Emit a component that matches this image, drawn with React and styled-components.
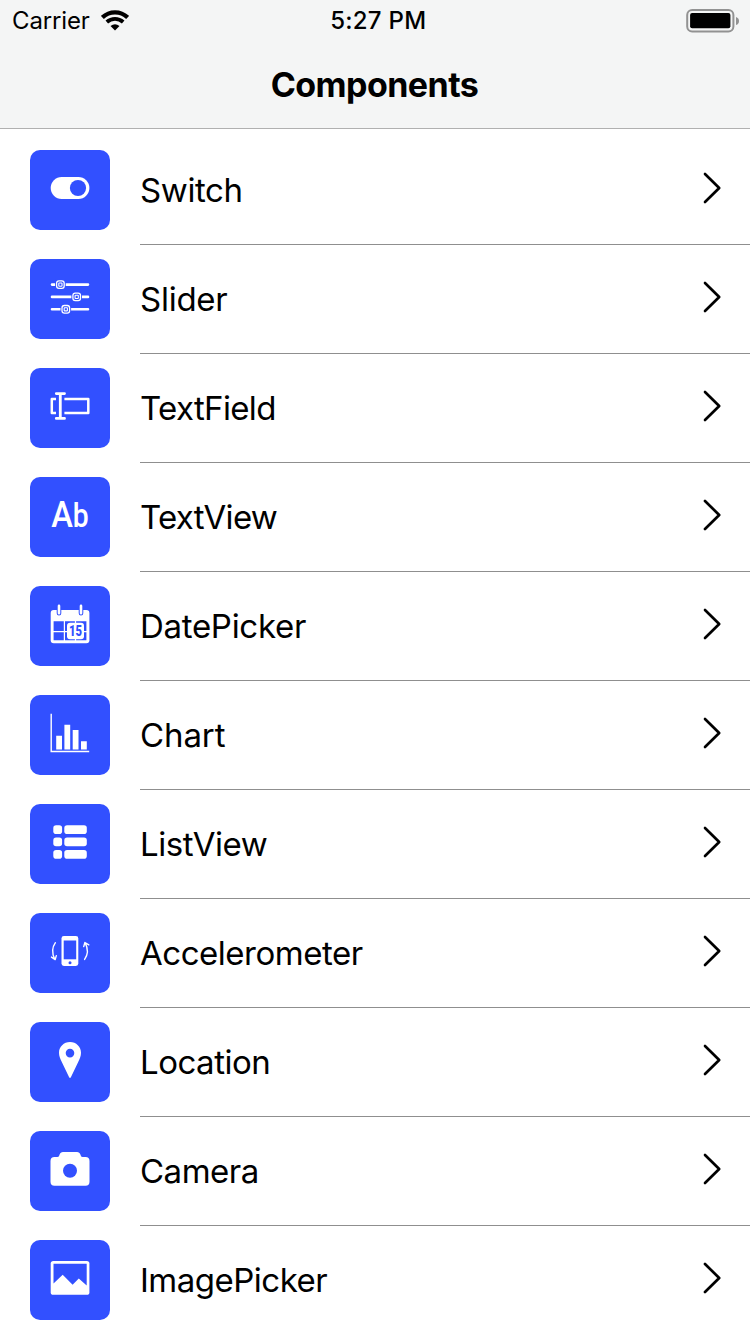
import React from 'react';
import styled, { createGlobalStyle } from 'styled-components';

const BLUE = '#3250ff';
const FONT = 'Inter, "Liberation Sans", sans-serif';

const GlobalStyle = createGlobalStyle`
  * { box-sizing: border-box; }
  body { margin: 0; background: #fff; }
`;

const Screen = styled.div`
  width: 750px;
  height: 1334px;
  overflow: hidden;
  background: #fff;
  color: #000;
  font-family: ${FONT};
`;

const Header = styled.header`
  height: 129px;
  background: #f4f5f5;
  border-bottom: 1px solid #b0b0b0;
`;

const StatusBar = styled.div`
  height: 40px;
  display: grid;
  grid-template-columns: 1fr auto 1fr;
  align-items: center;
  padding: 1px 10px 0 12px;
`;

const Carrier = styled.div`
  display: flex;
  align-items: center;
  gap: 11px;
`;

const StatusText = styled.span`
  display: inline-block;
  font-size: 24px;
  line-height: 38px;
  font-weight: ${(p) => p.$weight || 400};
  letter-spacing: ${(p) => p.$spacing || '0'};
  padding-left: ${(p) => p.$inset || '0'};
`;

const Battery = styled.svg`
  justify-self: end;
`;

const Title = styled.h1`
  margin: 0;
  height: 88px;
  padding-right: 1px;
  line-height: 89px;
  text-align: center;
  font-size: 34px;
  font-weight: 700;
  letter-spacing: -0.55px;
`;

const List = styled.ul`
  list-style: none;
  margin: 0;
  padding: 7px 0 0;
`;

const Row = styled.li`
  height: 109px;
  display: flex;
  gap: 30px;
  padding-left: 30px;
`;

const Tile = styled.div`
  width: 80px;
  height: 80px;
  margin-top: 14px;
  border-radius: 10px;
  background: ${BLUE};
  flex: none;
`;

const RowBody = styled.div`
  flex: 1;
  display: flex;
  align-items: center;
  justify-content: space-between;
  padding-right: 28px;
  border-bottom: 1px solid #8f8f8f;
`;

const Label = styled.span`
  font-size: 33px;
  line-height: 40px;
  padding-bottom: 1px;
  letter-spacing: ${(p) => p.$spacing || 0}px;
  white-space: nowrap;
`;

const Chevron = styled.svg`
  flex: none;
  margin-bottom: 4px;
`;

const Knob = ({ x, y }) => (
  <g>
    <rect x={x - 5.3} y={y - 5} width="10.6" height="10" fill={BLUE} />
    <rect x={x - 3.8} y={y - 3.8} width="7.6" height="7.6" rx="2.4" fill="none" stroke="#fff" strokeWidth="1.3" />
    <rect x={x - 1.6} y={y - 1.6} width="3.2" height="3.2" rx="0.4" fill="none" stroke="#fff" strokeWidth="1.1" />
  </g>
);

const icons = {
  switch: (
    <>
      <rect x="20.7" y="27" width="38.7" height="22" rx="11" fill="#fff" />
      <circle cx="48" cy="38" r="8.1" fill={BLUE} />
    </>
  ),
  slider: (
    <>
      <path d="M22 25.6H58M22 37.9H58M22 50.3H58" stroke="#fff" strokeWidth="2.6" strokeLinecap="round" />
      <Knob x={30.4} y={25.6} />
      <Knob x={46.7} y={37.9} />
      <Knob x={35.8} y={50.3} />
    </>
  ),
  field: (
    <g fill="none" stroke="#fff" strokeWidth="2.5" strokeLinejoin="round">
      <path d="M26 30.9H21.8V44.9H26" />
      <path d="M34.4 30.9H58.3V44.9H34.4" />
      <path d="M30.3 26V50" strokeWidth="2.8" />
      <path d="M26.2 25.6H34.6M26.2 50.4H34.6" strokeWidth="2.6" strokeLinecap="round" />
    </g>
  ),
  text: (
    <text transform="translate(21.2 50) scale(0.87 1)" fill="#fff" fontFamily="Roboto, sans-serif" fontWeight="500">
      <tspan fontSize="37.5">A</tspan>
      <tspan fontSize="32.5">b</tspan>
    </text>
  ),
  calendar: (
    <>
      <rect x="20.7" y="24" width="38.7" height="33.3" rx="3" fill="#fff" />
      <path d="M23.6 35.2H33.8V45H23.6ZM35 35.2H44.9V45H35ZM46.1 35.2H56.4V45H46.1ZM23.6 46.2H33.8V54.3H23.6ZM35 46.2H44.9V54.3H35ZM46.1 46.2H56.4V54.3H46.1Z" fill={BLUE} />
      <path d="M29 19.7V27.3M51 19.7V27.3" stroke={BLUE} strokeWidth="4.6" strokeLinecap="round" />
      <path d="M29 19.9V27.2M51 19.9V27.2" stroke="#fff" strokeWidth="2.6" strokeLinecap="round" />
      <rect x="37" y="36.7" width="17" height="16.6" rx="3" fill="#fff" />
      <text x="45.6" y="50.1" textAnchor="middle" fontFamily="Roboto, sans-serif" fontWeight="900" fontSize="14.5" textLength="13" lengthAdjust="spacingAndGlyphs" fill={BLUE}>15</text>
    </>
  ),
  chart: (
    <>
      <path d="M21.2 18.7V56.5H59.2" fill="none" stroke="#fff" strokeWidth="1.4" />
      <path d="M26.2 40.7H32V54.6H26.2ZM34.4 29.8H40.2V54.6H34.4ZM42.7 35H48.5V54.6H42.7ZM51 46.2H56.8V54.6H51Z" fill="#fff" />
    </>
  ),
  list: (
    <g fill="#fff">
      {[21.3, 33.6, 46].map((y) => (
        <g key={y}>
          <rect x="23.3" y={y} width="8.8" height="8.7" rx="2.8" />
          <rect x="34.3" y={y} width="22.5" height="8.7" rx="2.8" />
        </g>
      ))}
    </g>
  ),
  accel: (
    <>
      <rect x="31.5" y="23" width="16.8" height="30" rx="2.4" fill="#fff" />
      <rect x="33.7" y="27.5" width="12.5" height="18.8" fill={BLUE} />
      <circle cx="40" cy="49.7" r="1.5" fill={BLUE} />
      <g fill="none" stroke="#fff" strokeWidth="1.4" strokeLinecap="round" strokeLinejoin="round">
        <path d="M25.4 29.7C22 34.5 21.9 40.6 24.8 46.2M21.5 44.1L25.2 46.6L26.3 42.6" />
        <path d="M54.6 46.4C58 41.6 58.1 35.5 55.2 29.9M53.7 33.6L54.9 29.5L58.8 31.8" />
      </g>
    </>
  ),
  pin: (
    <path
      fill="#fff"
      fillRule="evenodd"
      d="M40 20C46.2 20 51 24.8 51 30.8C51 34.3 49.7 37 48.2 40L41 55.1Q40 56.9 39 55.1L31.8 40C30.3 37 29 34.3 29 30.8C29 24.8 33.8 20 40 20ZM40 26.8A4.3 4.3 0 1 0 40 35.4A4.3 4.3 0 1 0 40 26.8Z"
    />
  ),
  camera: (
    <>
      <path d="M24.5 26H27.4C28.7 26 29 25.3 29.5 23.8C30.2 21.8 31.3 21 33 21H47C48.7 21 49.8 21.8 50.5 23.8C51 25.3 51.3 26 52.6 26H55.5Q59.5 26 59.5 30V50.8Q59.5 54.8 55.5 54.8H24.5Q20.5 54.8 20.5 50.8V30Q20.5 26 24.5 26Z" fill="#fff" />
      <circle cx="40" cy="39.7" r="7" fill={BLUE} />
    </>
  ),
  image: (
    <>
      <rect x="20.7" y="21" width="38.7" height="33.8" rx="2.6" fill="#fff" />
      <path d="M23.5 23.8H56.7V45.6L48.8 38.5L42.6 44.7L32.7 34.8L23.5 43.6Z" fill={BLUE} />
    </>
  ),
};

const items = [
  ['Switch', 'switch', -0.4],
  ['Slider', 'slider', -0.25],
  ['TextField', 'field', -0.65],
  ['TextView', 'text', -0.7],
  ['DatePicker', 'calendar', -0.3],
  ['Chart', 'chart', -0.1],
  ['ListView', 'list', -0.45],
  ['Accelerometer', 'accel', -0.47],
  ['Location', 'pin', -0.5],
  ['Camera', 'camera', -0.5],
  ['ImagePicker', 'image', -0.5],
];

export default function App() {
  return (
    <Screen>
      <GlobalStyle />
      <Header>
        <StatusBar>
          <Carrier>
            <StatusText $spacing="-0.15px">Carrier</StatusText>
            <svg width="28" height="21" viewBox="0 0 28 21">
              <path d="M1.4 7.4C8.6 0.7 19.4 0.7 26.6 7.4" fill="none" stroke="#000" strokeWidth="4.2" />
              <path d="M5.8 12C10.6 7.8 17.4 7.8 22.2 12" fill="none" stroke="#000" strokeWidth="3.9" />
              <path d="M9.5 15.9Q14 12.6 18.5 15.9L14 20.4Z" fill="#000" />
            </svg>
          </Carrier>
          <StatusText $weight={500} $spacing="0.25px" $inset="4.5px">5:27 PM</StatusText>
          <Battery width="54" height="24" viewBox="0 0 54 24">
            <rect x="1.2" y="1" width="46.2" height="21.4" rx="5" fill="none" stroke="#929292" strokeWidth="2" />
            <rect x="4.1" y="3.9" width="40.3" height="15.4" rx="2" fill="#000" />
            <path d="M50 8Q53 9 53 12T50 16Z" fill="#929292" />
          </Battery>
        </StatusBar>
        <Title>Components</Title>
      </Header>
      <List>
        {items.map(([name, icon, spacing]) => (
          <Row key={name}>
            <Tile>
              <svg width="80" height="80" viewBox="0 0 80 80" aria-hidden="true">{icons[icon]}</svg>
            </Tile>
            <RowBody>
              <Label $spacing={spacing}>{name}</Label>
              <Chevron width="20" height="32" viewBox="0 0 20 32">
                <path d="M3 2L17.2 16L3 30" fill="none" stroke="#000" strokeWidth="2.7" strokeLinecap="round" strokeLinejoin="round" />
              </Chevron>
            </RowBody>
          </Row>
        ))}
      </List>
    </Screen>
  );
}
